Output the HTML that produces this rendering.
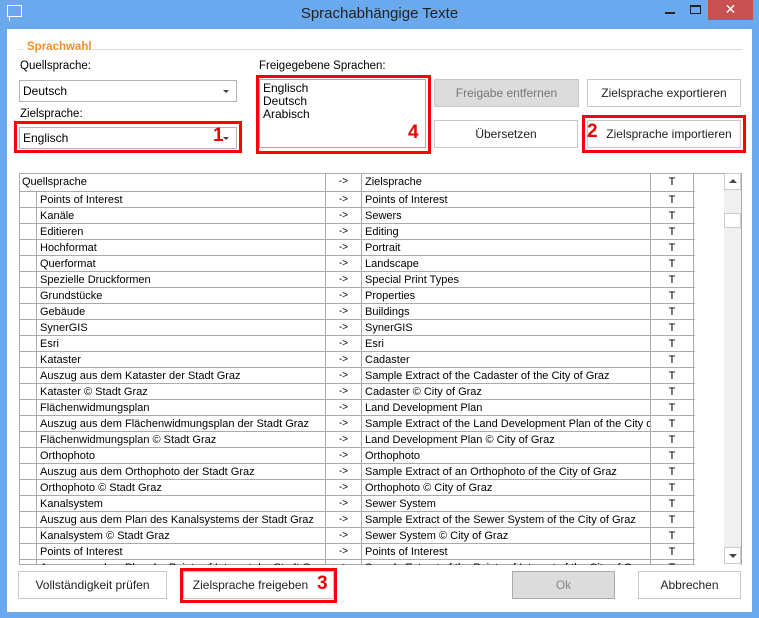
<!DOCTYPE html>
<html><head><meta charset="utf-8"><style>
*{box-sizing:border-box;margin:0;padding:0}
body{width:759px;height:618px;background:#6aa9ee;font-family:"Liberation Sans",sans-serif;font-size:11.5px;color:#000;position:relative;overflow:hidden}
.a{position:absolute}
.client{left:7px;top:29px;width:745px;height:583px;background:#fff}
.btn{position:absolute;border:1px solid #c8c8c8;background:#fff;text-align:center;font-size:12px;color:#222}
.red{position:absolute;border:3px solid #f00}
.num{position:absolute;color:#e00;font-weight:bold;font-size:19px}
.combo{position:absolute;border:1px solid #b4b4b4;background:#fff;padding-left:3px;font-size:12px}
.combo:after{content:"";position:absolute;right:7px;top:9px;border-left:3px solid transparent;border-right:3px solid transparent;border-top:3px solid #444}
.row{position:absolute;left:19px;width:676px;height:16px;border-bottom:1px solid #aaa;font-size:11px}
.row div{position:absolute;top:0;height:16px;line-height:16px;border-right:1px solid #aaa;white-space:nowrap;overflow:hidden}
</style></head><body>
<div class="a" style="left:7px;top:5px;width:15px;height:12px;border:1.5px solid #fff"></div>
<div class="a" style="left:9px;top:16px;width:5px;height:5px;border-left:1.5px solid #fff"></div>
<div class="a" style="left:0;width:759px;top:5px;text-align:center;font-size:15px;color:#222">Sprachabhängige Texte</div>
<div class="a" style="left:665px;top:12px;width:10px;height:2px;background:#222"></div>
<div class="a" style="left:690px;top:5px;width:11px;height:9px;border:1px solid #222;border-top-width:2px"></div>
<div class="a" style="left:708px;top:0;width:45px;height:20px;background:#c75050;color:#fff;text-align:center;font-size:14px;line-height:19px">✕</div>
<div class="a client"></div>
<div class="a" style="left:18px;top:49px;width:5px;height:1px;background:#ddd"></div>
<div class="a" style="left:92px;top:49px;width:650px;height:1px;background:#ddd"></div>
<div class="a" style="left:27px;top:41px;color:#f0902a;font-weight:bold;font-size:11.5px">Sprachwahl</div>
<div class="a" style="left:20px;top:60px">Quellsprache:</div>
<div class="combo" style="left:19px;top:80px;width:218px;height:22px;line-height:20px">Deutsch</div>
<div class="a" style="left:20px;top:108px">Zielsprache:</div>
<div class="red" style="left:14px;top:121px;width:228px;height:32px"></div>
<div class="combo" style="left:19px;top:127px;width:218px;height:22px;line-height:20px">Englisch</div>
<div class="num" style="left:213px;top:125px">1</div>
<div class="a" style="left:259px;top:60px">Freigegebene Sprachen:</div>
<div class="red" style="left:256px;top:75px;width:175px;height:79px"></div>
<div class="a" style="left:259px;top:79px;width:167px;height:69px;border:1px solid #aaa;padding:2px 3px;line-height:13px;font-size:12px">Englisch<br>Deutsch<br>Arabisch</div>
<div class="num" style="left:408px;top:122px">4</div>
<div class="btn" style="left:434px;top:79px;width:145px;height:28px;line-height:26px;background:#dcdcdc;color:#777">Freigabe entfernen</div>
<div class="btn" style="left:587px;top:79px;width:154px;height:28px;line-height:26px">Zielsprache exportieren</div>
<div class="btn" style="left:434px;top:120px;width:144px;height:28px;line-height:26px">Übersetzen</div>
<div class="red" style="left:582px;top:115px;width:164px;height:38px"></div>
<div class="btn" style="left:587px;top:120px;width:154px;height:28px;line-height:26px;padding-left:10px">Zielsprache importieren</div>
<div class="num" style="left:587px;top:121px">2</div>
<div class="a" style="left:19px;top:173px;width:723px;height:392px;border:1px solid #aaa;border-bottom:none;overflow:hidden" id="g"></div>
<div id="rows"></div>
<div class="a" style="left:724px;top:173px;width:17px;height:391px;background:#f0f0f0"></div>
<div class="a" style="left:724px;top:173px;width:17px;height:17px;background:#fff;border:1px solid #ccc"></div>
<div class="a" style="left:729px;top:179px;border-left:4px solid transparent;border-right:4px solid transparent;border-bottom:4px solid #444"></div>
<div class="a" style="left:724px;top:213px;width:17px;height:15px;background:#fff;border:1px solid #ccc"></div>
<div class="a" style="left:724px;top:547px;width:17px;height:17px;background:#fff;border:1px solid #ccc"></div>
<div class="a" style="left:729px;top:554px;border-left:4px solid transparent;border-right:4px solid transparent;border-top:4px solid #444"></div>
<div class="btn" style="left:18px;top:571px;width:149px;height:28px;line-height:26px">Vollständigkeit prüfen</div>
<div class="red" style="left:180px;top:568px;width:157px;height:35px"></div>
<div class="btn" style="left:183px;top:571px;width:151px;height:28px;line-height:26px;padding-right:16px">Zielsprache freigeben</div>
<div class="num" style="left:317px;top:573px">3</div>
<div class="btn" style="left:512px;top:571px;width:103px;height:28px;line-height:26px;background:#dcdcdc;color:#888;border-color:#aaa">Ok</div>
<div class="btn" style="left:638px;top:571px;width:103px;height:28px;line-height:26px">Abbrechen</div>
<script>
var d=[["Points of Interest","Points of Interest"],["Kanäle","Sewers"],["Editieren","Editing"],["Hochformat","Portrait"],["Querformat","Landscape"],["Spezielle Druckformen","Special Print Types"],["Grundstücke","Properties"],["Gebäude","Buildings"],["SynerGIS","SynerGIS"],["Esri","Esri"],["Kataster","Cadaster"],["Auszug aus dem Kataster der Stadt Graz","Sample Extract of the Cadaster of the City of Graz"],["Kataster © Stadt Graz","Cadaster © City of Graz"],["Flächenwidmungsplan","Land Development Plan"],["Auszug aus dem Flächenwidmungsplan der Stadt Graz","Sample Extract of the Land Development Plan of the City of Graz"],["Flächenwidmungsplan © Stadt Graz","Land Development Plan © City of Graz"],["Orthophoto","Orthophoto"],["Auszug aus dem Orthophoto der Stadt Graz","Sample Extract of an Orthophoto of the City of Graz"],["Orthophoto © Stadt Graz","Orthophoto © City of Graz"],["Kanalsystem","Sewer System"],["Auszug aus dem Plan des Kanalsystems der Stadt Graz","Sample Extract of the Sewer System of the City of Graz"],["Kanalsystem © Stadt Graz","Sewer System © City of Graz"],["Points of Interest","Points of Interest"],["Auszug aus dem Plan der Points of Interest der Stadt Graz","Sample Extract of the Points of Interest of the City of Graz"]];
var h='<div class="row" style="top:173px;height:19px"><div style="left:0;width:307px;height:18px;line-height:18px;padding-left:3px">Quellsprache</div><div style="left:307px;width:36px;height:18px;line-height:18px;text-align:center;font-size:10px">-&gt;</div><div style="left:343px;width:289px;height:18px;line-height:18px;padding-left:3px">Zielsprache</div><div style="left:632px;width:43px;height:18px;line-height:18px;text-align:center">T</div></div>';
d.forEach(function(r,i){var t=192+i*16;var hh=i==23?'height:5px;':'';h+='<div class="row" style="top:'+t+'px;'+hh+'"><div style="left:0;width:18px;'+hh+'"></div><div style="left:18px;width:289px;padding-left:3px;'+hh+'">'+r[0]+'</div><div style="left:307px;width:36px;text-align:center;font-size:10px;'+hh+'">-&gt;</div><div style="left:343px;width:289px;padding-left:3px;'+hh+'">'+r[1]+'</div><div style="left:632px;width:43px;text-align:center;'+hh+'">T</div></div>';});
document.getElementById('rows').innerHTML=h;
</script>
</body></html>
